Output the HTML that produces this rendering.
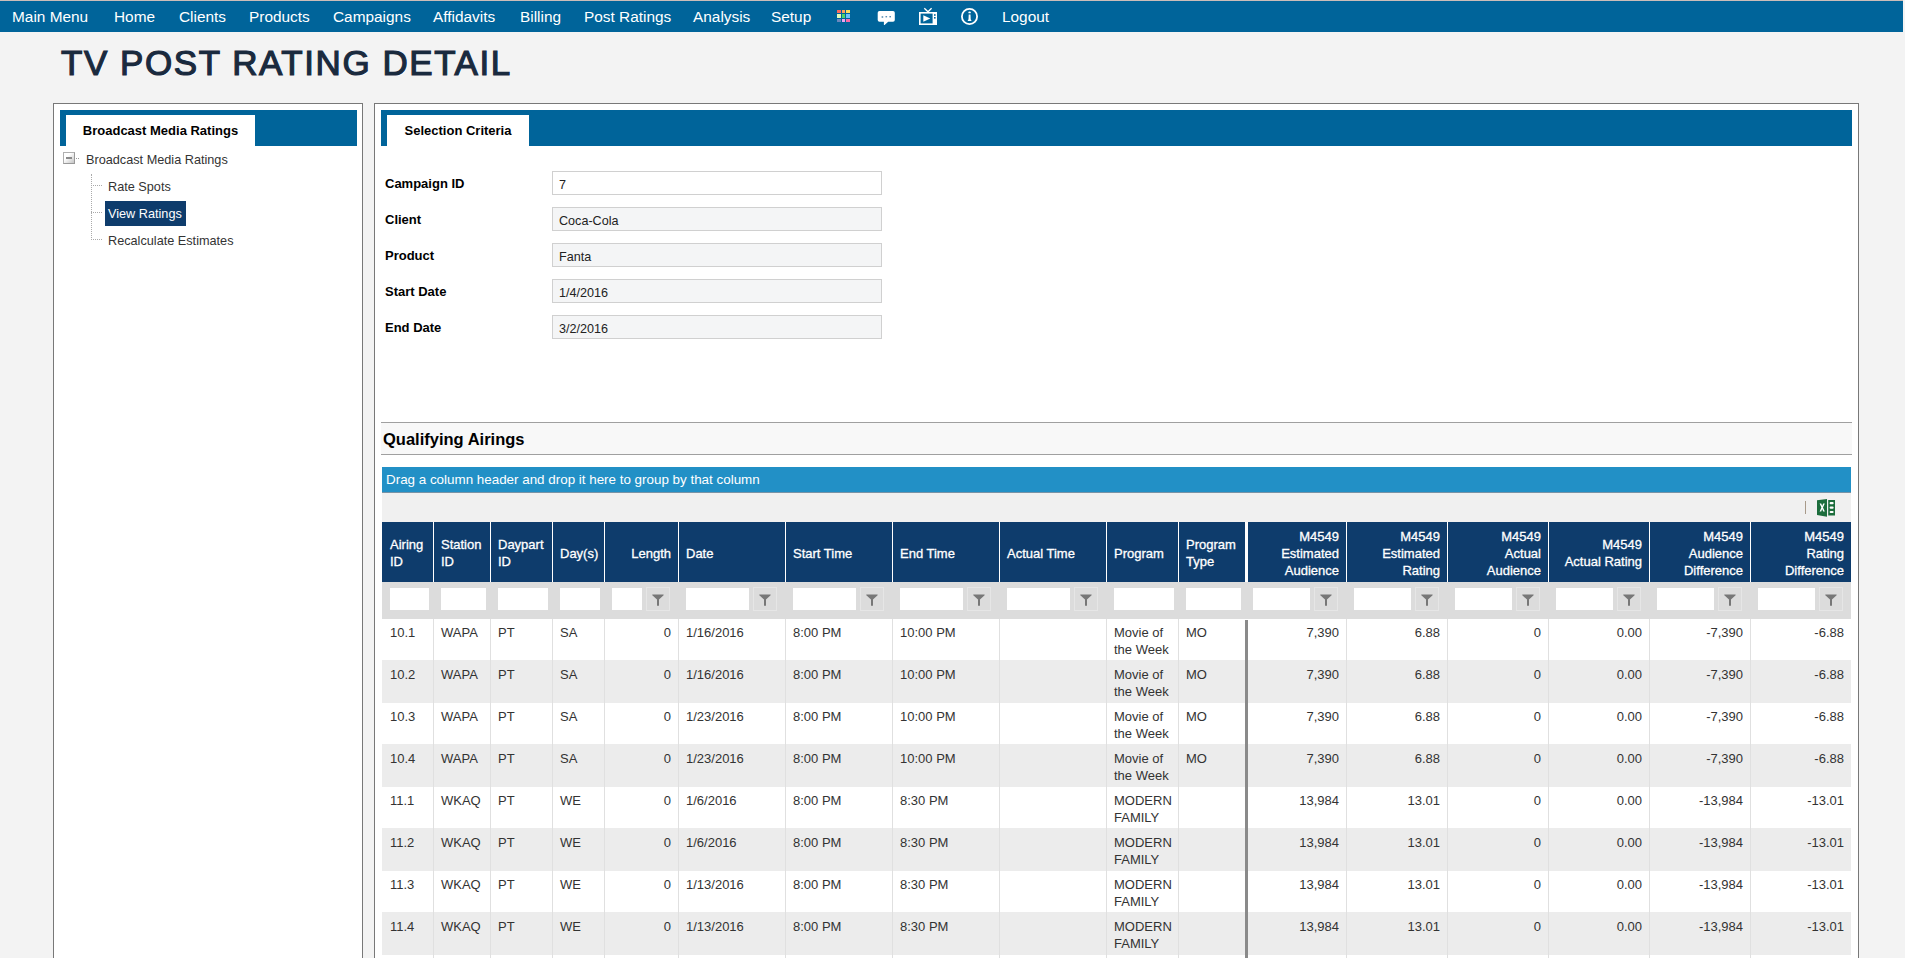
<!DOCTYPE html><html><head><meta charset="utf-8"><title>TV Post Rating Detail</title><style>
*{box-sizing:border-box;margin:0;padding:0}
html,body{width:1905px;height:958px;overflow:hidden}
body{font-family:"Liberation Sans", sans-serif;background:#f3f3f3;position:relative;color:#333}
.a{position:absolute}
.nav{left:0;top:0;width:1903px;height:32px;background:#00649a;border-top:1px solid #cbbdb9}
.nt{position:absolute;top:8px;font-size:15.4px;line-height:18px;color:#fff;white-space:nowrap}
.title{left:61px;top:43px;font-size:35px;line-height:40px;font-weight:normal;-webkit-text-stroke:1.2px #1a2a3e;color:#1a2a3e;letter-spacing:1.55px;white-space:nowrap;text-shadow:1px 1px 0 #fff}
.panel{background:#fff;border:1px solid #787878}
.hbar{background:#00649a}
.tab{background:#fff;font-weight:bold;font-size:13px;color:#000;text-align:center;white-space:nowrap}
.lbl{font-size:13px;font-weight:bold;color:#000;white-space:nowrap}
.inp{border:1px solid #d0d0d0;background:#f4f5f6;font-size:12.6px;color:#222;padding-left:6px;padding-top:2px;line-height:22px;white-space:nowrap}
.tree{font-size:12.7px;color:#333;white-space:nowrap;line-height:17px}
.hd{background:#0e3c6c;color:#fff;-webkit-text-stroke:0.3px #fff;font-size:13px;line-height:17px;display:flex;align-items:center;padding:2px 7px 0 7px}
.hd.r{justify-content:flex-end;text-align:right}
.sep{background:#fff}
.fr{background:#dcdcdc}
.fi{background:#fff}
.fb{border:1px solid #e6e6e6;background:#dcdcdc}
.cell{font-size:13px;line-height:17px;color:#333;padding:5px 7px 0 7px;white-space:nowrap;overflow:hidden}
.cell.r{text-align:right}
.vl{background:#e0e0e0;width:1px}
</style></head><body>
<div class="a nav"></div>
<div class="nt" style="left:12px">Main Menu</div>
<div class="nt" style="left:114px">Home</div>
<div class="nt" style="left:179px">Clients</div>
<div class="nt" style="left:249px">Products</div>
<div class="nt" style="left:333px">Campaigns</div>
<div class="nt" style="left:433px">Affidavits</div>
<div class="nt" style="left:520px">Billing</div>
<div class="nt" style="left:584px">Post Ratings</div>
<div class="nt" style="left:693px">Analysis</div>
<div class="nt" style="left:771px">Setup</div>
<div class="nt" style="left:1002px">Logout</div>
<div class="a" style="left:837px;top:10px;width:4px;height:3px;background:#fb6a5e"></div>
<div class="a" style="left:842px;top:10px;width:3px;height:3px;background:#fca15c"></div>
<div class="a" style="left:846px;top:10px;width:4px;height:3px;background:#fbdc5c"></div>
<div class="a" style="left:837px;top:14px;width:4px;height:4px;background:#e6fbb6"></div>
<div class="a" style="left:842px;top:14px;width:3px;height:4px;background:#4ed46a"></div>
<div class="a" style="left:846px;top:14px;width:4px;height:4px;background:#6ec2fb"></div>
<div class="a" style="left:837px;top:19px;width:4px;height:3px;background:#6b87bd"></div>
<div class="a" style="left:842px;top:19px;width:3px;height:3px;background:#f1a1ee"></div>
<div class="a" style="left:846px;top:19px;width:4px;height:3px;background:#fb69a6"></div>
<svg class="a" style="left:877px;top:10px" width="19" height="16" viewBox="0 0 19 16">
<path d="M2.5 1 H16 A1.8 1.8 0 0 1 17.8 2.8 V10 A1.8 1.8 0 0 1 16 11.8 H11.2 L7.6 15 H6.9 V11.8 H2.5 A1.8 1.8 0 0 1 0.7 10 V2.8 A1.8 1.8 0 0 1 2.5 1 Z" fill="#fff"/>
<rect x="4.6" y="6.2" width="1.6" height="1.6" fill="#5a8fb5"/><rect x="8.5" y="6" width="1.6" height="1.4" fill="#5a8fb5"/><rect x="12.4" y="6" width="1.6" height="1.4" fill="#5a8fb5"/>
</svg>
<svg class="a" style="left:918px;top:7px" width="21" height="19" viewBox="0 0 21 19">
<path d="M6.3 1.2 L10 4.8 L13.6 1.2" stroke="#fff" stroke-width="1.3" fill="none"/>
<rect x="1" y="5" width="18" height="13" fill="#fff"/>
<rect x="2.6" y="6.6" width="12" height="9.8" fill="#00649a"/>
<path d="M5.3 8.2 L12.3 11.5 L5.3 14.8 Z" fill="#fff"/>
<rect x="16" y="7.2" width="1.6" height="1.6" fill="#00649a"/><rect x="16" y="10" width="1.6" height="1.6" fill="#00649a"/>
</svg>
<svg class="a" style="left:960px;top:7px" width="19" height="19" viewBox="0 0 19 19">
<circle cx="9.5" cy="9.5" r="7.6" stroke="#fff" stroke-width="1.8" fill="none"/>
<ellipse cx="9.6" cy="5.4" rx="1.3" ry="0.9" fill="#fff"/>
<path d="M8.7 7.4 H10.5 L10.7 12.3 L11.6 13.9 H7.6 L8.5 12.3 Z" fill="#fff"/>
</svg>
<div class="a title">TV POST RATING DETAIL</div>
<div class="a panel" style="left:53px;top:103px;width:310px;height:870px"></div>
<div class="a hbar" style="left:60px;top:110px;width:297px;height:36px"></div>
<div class="a tab" style="left:66px;top:115px;width:189px;height:31px;line-height:31px">Broadcast Media Ratings</div>
<div class="a" style="left:63px;top:152px;width:12px;height:12px;border:1px solid #b0b0b0;border-right-color:#999;border-bottom-color:#999;background:linear-gradient(135deg,#fff 35%,#c4c4c4)"></div>
<div class="a" style="left:66px;top:157px;width:6px;height:2px;background:#8a8a8a"></div>
<div class="a" style="left:76px;top:158px;width:1px;height:1px;background:#999"></div><div class="a" style="left:78px;top:158px;width:1px;height:1px;background:#999"></div>
<div class="a tree" style="left:86px;top:152px">Broadcast Media Ratings</div>
<div class="a" style="left:91px;top:174px;width:1px;height:66px;border-left:1px dotted #aaa"></div>
<div class="a" style="left:91px;top:185px;width:11px;height:1px;border-top:1px dotted #aaa"></div>
<div class="a" style="left:91px;top:212px;width:11px;height:1px;border-top:1px dotted #aaa"></div>
<div class="a" style="left:91px;top:239px;width:11px;height:1px;border-top:1px dotted #aaa"></div>
<div class="a tree" style="left:108px;top:179px">Rate Spots</div>
<div class="a" style="left:105px;top:201px;width:81px;height:25px;background:#0e3c6c"></div>
<div class="a tree" style="left:108px;top:206px;color:#fff">View Ratings</div>
<div class="a tree" style="left:108px;top:233px">Recalculate Estimates</div>
<div class="a panel" style="left:374px;top:103px;width:1485px;height:870px"></div>
<div class="a hbar" style="left:381px;top:110px;width:1471px;height:36px"></div>
<div class="a tab" style="left:387px;top:115px;width:142px;height:31px;line-height:31px">Selection Criteria</div>
<div class="a lbl" style="left:385px;top:175px;line-height:17px">Campaign ID</div>
<div class="a inp" style="left:552px;top:171px;width:330px;height:24px;background:#fff;">7</div>
<div class="a lbl" style="left:385px;top:211px;line-height:17px">Client</div>
<div class="a inp" style="left:552px;top:207px;width:330px;height:24px;">Coca-Cola</div>
<div class="a lbl" style="left:385px;top:247px;line-height:17px">Product</div>
<div class="a inp" style="left:552px;top:243px;width:330px;height:24px;">Fanta</div>
<div class="a lbl" style="left:385px;top:283px;line-height:17px">Start Date</div>
<div class="a inp" style="left:552px;top:279px;width:330px;height:24px;">1/4/2016</div>
<div class="a lbl" style="left:385px;top:319px;line-height:17px">End Date</div>
<div class="a inp" style="left:552px;top:315px;width:330px;height:24px;">3/2/2016</div>
<div class="a" style="left:381px;top:422px;width:1471px;height:33px;background:#f8f8f8;border-top:1px solid #a0a0a0;border-bottom:1px solid #a0a0a0"></div>
<div class="a" style="left:383px;top:429px;font-size:16.5px;font-weight:bold;color:#000;line-height:20px;white-space:nowrap">Qualifying Airings</div>
<div class="a" style="left:382px;top:467px;width:1469px;height:26px;background:#2290c6;border-bottom:1px solid #7893a6;color:#fff;font-size:13.4px;line-height:25px;padding-left:4px;white-space:nowrap">Drag a column header and drop it here to group by that column</div>
<div class="a" style="left:382px;top:493px;width:1469px;height:29px;background:#f0f0f0"></div>
<div class="a" style="left:1805px;top:501px;width:1px;height:13px;background:#a89a8a"></div>
<svg class="a" style="left:1816px;top:498px" width="21" height="20" viewBox="0 0 21 20">
<path d="M1 2.2 L11 1 V18.8 L1 17 Z" fill="#1c6d3c"/>
<rect x="12.2" y="2" width="6.8" height="15.5" fill="#1c6d3c"/>
<path d="M3.6 5.6 L5.2 5.6 L6.2 7.9 L7.2 5.6 L8.8 5.6 L7 9.5 L8.8 13.4 L7.2 13.4 L6.2 11.1 L5.2 13.4 L3.6 13.4 L5.4 9.5 Z" fill="#fff"/>
<rect x="13.6" y="4" width="4" height="2.2" rx="1" fill="#fff"/><rect x="13.6" y="8.5" width="4" height="2.2" rx="1" fill="#fff"/><rect x="13.6" y="12.9" width="4" height="2.2" rx="1" fill="#fff"/>
</svg>
<div class="a" style="left:382px;top:522px;width:1469px;height:60px;background:#0e3c6c"></div>
<div class="a fr" style="left:382px;top:582px;width:1469px;height:37px"></div>
<div class="a" style="left:1245px;top:522px;width:3px;height:60px;background:#fff"></div>
<div class="a hd" style="left:382px;top:522px;width:51px;height:60px;padding-left:8px;">Airing<br>ID</div>
<div class="a fi" style="left:390px;top:588px;width:39px;height:22px"></div>
<div class="a hd" style="left:434px;top:522px;width:56px;height:60px;">Station<br>ID</div>
<div class="a fi" style="left:441px;top:588px;width:45px;height:22px"></div>
<div class="a hd" style="left:491px;top:522px;width:61px;height:60px;">Daypart<br>ID</div>
<div class="a fi" style="left:498px;top:588px;width:50px;height:22px"></div>
<div class="a hd" style="left:553px;top:522px;width:51px;height:60px;">Day(s)</div>
<div class="a fi" style="left:560px;top:588px;width:40px;height:22px"></div>
<div class="a hd r" style="left:605px;top:522px;width:73px;height:60px;">Length</div>
<div class="a fi" style="left:612px;top:588px;width:30px;height:22px"></div>
<div class="a fb" style="left:646px;top:587px;width:24px;height:24px"></div>
<svg class="a" style="left:652px;top:594px" width="12" height="12" viewBox="0 0 12 12"><path d="M0.3 0.6 H11.6 V1.2 L7 5.6 V11.7 H5 V5.6 L0.3 1.2 Z" fill="#777"/></svg>
<div class="a hd" style="left:679px;top:522px;width:106px;height:60px;">Date</div>
<div class="a fi" style="left:686px;top:588px;width:63px;height:22px"></div>
<div class="a fb" style="left:753px;top:587px;width:24px;height:24px"></div>
<svg class="a" style="left:759px;top:594px" width="12" height="12" viewBox="0 0 12 12"><path d="M0.3 0.6 H11.6 V1.2 L7 5.6 V11.7 H5 V5.6 L0.3 1.2 Z" fill="#777"/></svg>
<div class="a hd" style="left:786px;top:522px;width:106px;height:60px;">Start Time</div>
<div class="a fi" style="left:793px;top:588px;width:63px;height:22px"></div>
<div class="a fb" style="left:860px;top:587px;width:24px;height:24px"></div>
<svg class="a" style="left:866px;top:594px" width="12" height="12" viewBox="0 0 12 12"><path d="M0.3 0.6 H11.6 V1.2 L7 5.6 V11.7 H5 V5.6 L0.3 1.2 Z" fill="#777"/></svg>
<div class="a hd" style="left:893px;top:522px;width:106px;height:60px;">End Time</div>
<div class="a fi" style="left:900px;top:588px;width:63px;height:22px"></div>
<div class="a fb" style="left:967px;top:587px;width:24px;height:24px"></div>
<svg class="a" style="left:973px;top:594px" width="12" height="12" viewBox="0 0 12 12"><path d="M0.3 0.6 H11.6 V1.2 L7 5.6 V11.7 H5 V5.6 L0.3 1.2 Z" fill="#777"/></svg>
<div class="a hd" style="left:1000px;top:522px;width:106px;height:60px;">Actual Time</div>
<div class="a fi" style="left:1007px;top:588px;width:63px;height:22px"></div>
<div class="a fb" style="left:1074px;top:587px;width:24px;height:24px"></div>
<svg class="a" style="left:1080px;top:594px" width="12" height="12" viewBox="0 0 12 12"><path d="M0.3 0.6 H11.6 V1.2 L7 5.6 V11.7 H5 V5.6 L0.3 1.2 Z" fill="#777"/></svg>
<div class="a hd" style="left:1107px;top:522px;width:71px;height:60px;">Program</div>
<div class="a fi" style="left:1114px;top:588px;width:60px;height:22px"></div>
<div class="a hd" style="left:1179px;top:522px;width:66px;height:60px;">Program<br>Type</div>
<div class="a fi" style="left:1186px;top:588px;width:55px;height:22px"></div>
<div class="a hd r" style="left:1248px;top:522px;width:98px;height:60px;">M4549<br>Estimated<br>Audience</div>
<div class="a fi" style="left:1253px;top:588px;width:57px;height:22px"></div>
<div class="a fb" style="left:1314px;top:587px;width:24px;height:24px"></div>
<svg class="a" style="left:1320px;top:594px" width="12" height="12" viewBox="0 0 12 12"><path d="M0.3 0.6 H11.6 V1.2 L7 5.6 V11.7 H5 V5.6 L0.3 1.2 Z" fill="#777"/></svg>
<div class="a hd r" style="left:1347px;top:522px;width:100px;height:60px;">M4549<br>Estimated<br>Rating</div>
<div class="a fi" style="left:1354px;top:588px;width:57px;height:22px"></div>
<div class="a fb" style="left:1415px;top:587px;width:24px;height:24px"></div>
<svg class="a" style="left:1421px;top:594px" width="12" height="12" viewBox="0 0 12 12"><path d="M0.3 0.6 H11.6 V1.2 L7 5.6 V11.7 H5 V5.6 L0.3 1.2 Z" fill="#777"/></svg>
<div class="a hd r" style="left:1448px;top:522px;width:100px;height:60px;">M4549<br>Actual<br>Audience</div>
<div class="a fi" style="left:1455px;top:588px;width:57px;height:22px"></div>
<div class="a fb" style="left:1516px;top:587px;width:24px;height:24px"></div>
<svg class="a" style="left:1522px;top:594px" width="12" height="12" viewBox="0 0 12 12"><path d="M0.3 0.6 H11.6 V1.2 L7 5.6 V11.7 H5 V5.6 L0.3 1.2 Z" fill="#777"/></svg>
<div class="a hd r" style="left:1549px;top:522px;width:100px;height:60px;">M4549<br>Actual Rating</div>
<div class="a fi" style="left:1556px;top:588px;width:57px;height:22px"></div>
<div class="a fb" style="left:1617px;top:587px;width:24px;height:24px"></div>
<svg class="a" style="left:1623px;top:594px" width="12" height="12" viewBox="0 0 12 12"><path d="M0.3 0.6 H11.6 V1.2 L7 5.6 V11.7 H5 V5.6 L0.3 1.2 Z" fill="#777"/></svg>
<div class="a hd r" style="left:1650px;top:522px;width:100px;height:60px;">M4549<br>Audience<br>Difference</div>
<div class="a fi" style="left:1657px;top:588px;width:57px;height:22px"></div>
<div class="a fb" style="left:1718px;top:587px;width:24px;height:24px"></div>
<svg class="a" style="left:1724px;top:594px" width="12" height="12" viewBox="0 0 12 12"><path d="M0.3 0.6 H11.6 V1.2 L7 5.6 V11.7 H5 V5.6 L0.3 1.2 Z" fill="#777"/></svg>
<div class="a hd r" style="left:1751px;top:522px;width:100px;height:60px;">M4549<br>Rating<br>Difference</div>
<div class="a fi" style="left:1758px;top:588px;width:57px;height:22px"></div>
<div class="a fb" style="left:1819px;top:587px;width:24px;height:24px"></div>
<svg class="a" style="left:1825px;top:594px" width="12" height="12" viewBox="0 0 12 12"><path d="M0.3 0.6 H11.6 V1.2 L7 5.6 V11.7 H5 V5.6 L0.3 1.2 Z" fill="#777"/></svg>
<div class="a sep" style="left:433px;top:522px;width:1px;height:60px"></div>
<div class="a sep" style="left:490px;top:522px;width:1px;height:60px"></div>
<div class="a sep" style="left:552px;top:522px;width:1px;height:60px"></div>
<div class="a sep" style="left:604px;top:522px;width:1px;height:60px"></div>
<div class="a sep" style="left:678px;top:522px;width:1px;height:60px"></div>
<div class="a sep" style="left:785px;top:522px;width:1px;height:60px"></div>
<div class="a sep" style="left:892px;top:522px;width:1px;height:60px"></div>
<div class="a sep" style="left:999px;top:522px;width:1px;height:60px"></div>
<div class="a sep" style="left:1106px;top:522px;width:1px;height:60px"></div>
<div class="a sep" style="left:1178px;top:522px;width:1px;height:60px"></div>
<div class="a sep" style="left:1346px;top:522px;width:1px;height:60px"></div>
<div class="a sep" style="left:1447px;top:522px;width:1px;height:60px"></div>
<div class="a sep" style="left:1548px;top:522px;width:1px;height:60px"></div>
<div class="a sep" style="left:1649px;top:522px;width:1px;height:60px"></div>
<div class="a sep" style="left:1750px;top:522px;width:1px;height:60px"></div>
<div class="a" style="left:382px;top:619px;width:1469px;height:339px;background:#fff"></div>
<div class="a cell" style="left:382px;top:619px;width:51px;height:42px;padding-left:8px;">10.1</div>
<div class="a cell" style="left:434px;top:619px;width:56px;height:42px;">WAPA</div>
<div class="a cell" style="left:491px;top:619px;width:61px;height:42px;">PT</div>
<div class="a cell" style="left:553px;top:619px;width:51px;height:42px;">SA</div>
<div class="a cell r" style="left:605px;top:619px;width:73px;height:42px;">0</div>
<div class="a cell" style="left:679px;top:619px;width:106px;height:42px;">1/16/2016</div>
<div class="a cell" style="left:786px;top:619px;width:106px;height:42px;">8:00 PM</div>
<div class="a cell" style="left:893px;top:619px;width:106px;height:42px;">10:00 PM</div>
<div class="a cell" style="left:1107px;top:619px;width:71px;height:42px;">Movie of<br>the Week</div>
<div class="a cell" style="left:1179px;top:619px;width:66px;height:42px;">MO</div>
<div class="a cell r" style="left:1248px;top:619px;width:98px;height:42px;">7,390</div>
<div class="a cell r" style="left:1347px;top:619px;width:100px;height:42px;">6.88</div>
<div class="a cell r" style="left:1448px;top:619px;width:100px;height:42px;">0</div>
<div class="a cell r" style="left:1549px;top:619px;width:100px;height:42px;">0.00</div>
<div class="a cell r" style="left:1650px;top:619px;width:100px;height:42px;">-7,390</div>
<div class="a cell r" style="left:1751px;top:619px;width:100px;height:42px;">-6.88</div>
<div class="a" style="left:382px;top:660px;width:1469px;height:43px;background:#ececec"></div>
<div class="a cell" style="left:382px;top:661px;width:51px;height:42px;padding-left:8px;">10.2</div>
<div class="a cell" style="left:434px;top:661px;width:56px;height:42px;">WAPA</div>
<div class="a cell" style="left:491px;top:661px;width:61px;height:42px;">PT</div>
<div class="a cell" style="left:553px;top:661px;width:51px;height:42px;">SA</div>
<div class="a cell r" style="left:605px;top:661px;width:73px;height:42px;">0</div>
<div class="a cell" style="left:679px;top:661px;width:106px;height:42px;">1/16/2016</div>
<div class="a cell" style="left:786px;top:661px;width:106px;height:42px;">8:00 PM</div>
<div class="a cell" style="left:893px;top:661px;width:106px;height:42px;">10:00 PM</div>
<div class="a cell" style="left:1107px;top:661px;width:71px;height:42px;">Movie of<br>the Week</div>
<div class="a cell" style="left:1179px;top:661px;width:66px;height:42px;">MO</div>
<div class="a cell r" style="left:1248px;top:661px;width:98px;height:42px;">7,390</div>
<div class="a cell r" style="left:1347px;top:661px;width:100px;height:42px;">6.88</div>
<div class="a cell r" style="left:1448px;top:661px;width:100px;height:42px;">0</div>
<div class="a cell r" style="left:1549px;top:661px;width:100px;height:42px;">0.00</div>
<div class="a cell r" style="left:1650px;top:661px;width:100px;height:42px;">-7,390</div>
<div class="a cell r" style="left:1751px;top:661px;width:100px;height:42px;">-6.88</div>
<div class="a cell" style="left:382px;top:703px;width:51px;height:42px;padding-left:8px;">10.3</div>
<div class="a cell" style="left:434px;top:703px;width:56px;height:42px;">WAPA</div>
<div class="a cell" style="left:491px;top:703px;width:61px;height:42px;">PT</div>
<div class="a cell" style="left:553px;top:703px;width:51px;height:42px;">SA</div>
<div class="a cell r" style="left:605px;top:703px;width:73px;height:42px;">0</div>
<div class="a cell" style="left:679px;top:703px;width:106px;height:42px;">1/23/2016</div>
<div class="a cell" style="left:786px;top:703px;width:106px;height:42px;">8:00 PM</div>
<div class="a cell" style="left:893px;top:703px;width:106px;height:42px;">10:00 PM</div>
<div class="a cell" style="left:1107px;top:703px;width:71px;height:42px;">Movie of<br>the Week</div>
<div class="a cell" style="left:1179px;top:703px;width:66px;height:42px;">MO</div>
<div class="a cell r" style="left:1248px;top:703px;width:98px;height:42px;">7,390</div>
<div class="a cell r" style="left:1347px;top:703px;width:100px;height:42px;">6.88</div>
<div class="a cell r" style="left:1448px;top:703px;width:100px;height:42px;">0</div>
<div class="a cell r" style="left:1549px;top:703px;width:100px;height:42px;">0.00</div>
<div class="a cell r" style="left:1650px;top:703px;width:100px;height:42px;">-7,390</div>
<div class="a cell r" style="left:1751px;top:703px;width:100px;height:42px;">-6.88</div>
<div class="a" style="left:382px;top:744px;width:1469px;height:43px;background:#ececec"></div>
<div class="a cell" style="left:382px;top:745px;width:51px;height:42px;padding-left:8px;">10.4</div>
<div class="a cell" style="left:434px;top:745px;width:56px;height:42px;">WAPA</div>
<div class="a cell" style="left:491px;top:745px;width:61px;height:42px;">PT</div>
<div class="a cell" style="left:553px;top:745px;width:51px;height:42px;">SA</div>
<div class="a cell r" style="left:605px;top:745px;width:73px;height:42px;">0</div>
<div class="a cell" style="left:679px;top:745px;width:106px;height:42px;">1/23/2016</div>
<div class="a cell" style="left:786px;top:745px;width:106px;height:42px;">8:00 PM</div>
<div class="a cell" style="left:893px;top:745px;width:106px;height:42px;">10:00 PM</div>
<div class="a cell" style="left:1107px;top:745px;width:71px;height:42px;">Movie of<br>the Week</div>
<div class="a cell" style="left:1179px;top:745px;width:66px;height:42px;">MO</div>
<div class="a cell r" style="left:1248px;top:745px;width:98px;height:42px;">7,390</div>
<div class="a cell r" style="left:1347px;top:745px;width:100px;height:42px;">6.88</div>
<div class="a cell r" style="left:1448px;top:745px;width:100px;height:42px;">0</div>
<div class="a cell r" style="left:1549px;top:745px;width:100px;height:42px;">0.00</div>
<div class="a cell r" style="left:1650px;top:745px;width:100px;height:42px;">-7,390</div>
<div class="a cell r" style="left:1751px;top:745px;width:100px;height:42px;">-6.88</div>
<div class="a cell" style="left:382px;top:787px;width:51px;height:42px;padding-left:8px;">11.1</div>
<div class="a cell" style="left:434px;top:787px;width:56px;height:42px;">WKAQ</div>
<div class="a cell" style="left:491px;top:787px;width:61px;height:42px;">PT</div>
<div class="a cell" style="left:553px;top:787px;width:51px;height:42px;">WE</div>
<div class="a cell r" style="left:605px;top:787px;width:73px;height:42px;">0</div>
<div class="a cell" style="left:679px;top:787px;width:106px;height:42px;">1/6/2016</div>
<div class="a cell" style="left:786px;top:787px;width:106px;height:42px;">8:00 PM</div>
<div class="a cell" style="left:893px;top:787px;width:106px;height:42px;">8:30 PM</div>
<div class="a cell" style="left:1107px;top:787px;width:71px;height:42px;">MODERN<br>FAMILY</div>
<div class="a cell r" style="left:1248px;top:787px;width:98px;height:42px;">13,984</div>
<div class="a cell r" style="left:1347px;top:787px;width:100px;height:42px;">13.01</div>
<div class="a cell r" style="left:1448px;top:787px;width:100px;height:42px;">0</div>
<div class="a cell r" style="left:1549px;top:787px;width:100px;height:42px;">0.00</div>
<div class="a cell r" style="left:1650px;top:787px;width:100px;height:42px;">-13,984</div>
<div class="a cell r" style="left:1751px;top:787px;width:100px;height:42px;">-13.01</div>
<div class="a" style="left:382px;top:828px;width:1469px;height:43px;background:#ececec"></div>
<div class="a cell" style="left:382px;top:829px;width:51px;height:42px;padding-left:8px;">11.2</div>
<div class="a cell" style="left:434px;top:829px;width:56px;height:42px;">WKAQ</div>
<div class="a cell" style="left:491px;top:829px;width:61px;height:42px;">PT</div>
<div class="a cell" style="left:553px;top:829px;width:51px;height:42px;">WE</div>
<div class="a cell r" style="left:605px;top:829px;width:73px;height:42px;">0</div>
<div class="a cell" style="left:679px;top:829px;width:106px;height:42px;">1/6/2016</div>
<div class="a cell" style="left:786px;top:829px;width:106px;height:42px;">8:00 PM</div>
<div class="a cell" style="left:893px;top:829px;width:106px;height:42px;">8:30 PM</div>
<div class="a cell" style="left:1107px;top:829px;width:71px;height:42px;">MODERN<br>FAMILY</div>
<div class="a cell r" style="left:1248px;top:829px;width:98px;height:42px;">13,984</div>
<div class="a cell r" style="left:1347px;top:829px;width:100px;height:42px;">13.01</div>
<div class="a cell r" style="left:1448px;top:829px;width:100px;height:42px;">0</div>
<div class="a cell r" style="left:1549px;top:829px;width:100px;height:42px;">0.00</div>
<div class="a cell r" style="left:1650px;top:829px;width:100px;height:42px;">-13,984</div>
<div class="a cell r" style="left:1751px;top:829px;width:100px;height:42px;">-13.01</div>
<div class="a cell" style="left:382px;top:871px;width:51px;height:42px;padding-left:8px;">11.3</div>
<div class="a cell" style="left:434px;top:871px;width:56px;height:42px;">WKAQ</div>
<div class="a cell" style="left:491px;top:871px;width:61px;height:42px;">PT</div>
<div class="a cell" style="left:553px;top:871px;width:51px;height:42px;">WE</div>
<div class="a cell r" style="left:605px;top:871px;width:73px;height:42px;">0</div>
<div class="a cell" style="left:679px;top:871px;width:106px;height:42px;">1/13/2016</div>
<div class="a cell" style="left:786px;top:871px;width:106px;height:42px;">8:00 PM</div>
<div class="a cell" style="left:893px;top:871px;width:106px;height:42px;">8:30 PM</div>
<div class="a cell" style="left:1107px;top:871px;width:71px;height:42px;">MODERN<br>FAMILY</div>
<div class="a cell r" style="left:1248px;top:871px;width:98px;height:42px;">13,984</div>
<div class="a cell r" style="left:1347px;top:871px;width:100px;height:42px;">13.01</div>
<div class="a cell r" style="left:1448px;top:871px;width:100px;height:42px;">0</div>
<div class="a cell r" style="left:1549px;top:871px;width:100px;height:42px;">0.00</div>
<div class="a cell r" style="left:1650px;top:871px;width:100px;height:42px;">-13,984</div>
<div class="a cell r" style="left:1751px;top:871px;width:100px;height:42px;">-13.01</div>
<div class="a" style="left:382px;top:912px;width:1469px;height:43px;background:#ececec"></div>
<div class="a cell" style="left:382px;top:913px;width:51px;height:42px;padding-left:8px;">11.4</div>
<div class="a cell" style="left:434px;top:913px;width:56px;height:42px;">WKAQ</div>
<div class="a cell" style="left:491px;top:913px;width:61px;height:42px;">PT</div>
<div class="a cell" style="left:553px;top:913px;width:51px;height:42px;">WE</div>
<div class="a cell r" style="left:605px;top:913px;width:73px;height:42px;">0</div>
<div class="a cell" style="left:679px;top:913px;width:106px;height:42px;">1/13/2016</div>
<div class="a cell" style="left:786px;top:913px;width:106px;height:42px;">8:00 PM</div>
<div class="a cell" style="left:893px;top:913px;width:106px;height:42px;">8:30 PM</div>
<div class="a cell" style="left:1107px;top:913px;width:71px;height:42px;">MODERN<br>FAMILY</div>
<div class="a cell r" style="left:1248px;top:913px;width:98px;height:42px;">13,984</div>
<div class="a cell r" style="left:1347px;top:913px;width:100px;height:42px;">13.01</div>
<div class="a cell r" style="left:1448px;top:913px;width:100px;height:42px;">0</div>
<div class="a cell r" style="left:1549px;top:913px;width:100px;height:42px;">0.00</div>
<div class="a cell r" style="left:1650px;top:913px;width:100px;height:42px;">-13,984</div>
<div class="a cell r" style="left:1751px;top:913px;width:100px;height:42px;">-13.01</div>
<div class="a vl" style="left:433px;top:619px;height:340px"></div>
<div class="a vl" style="left:490px;top:619px;height:340px"></div>
<div class="a vl" style="left:552px;top:619px;height:340px"></div>
<div class="a vl" style="left:604px;top:619px;height:340px"></div>
<div class="a vl" style="left:678px;top:619px;height:340px"></div>
<div class="a vl" style="left:785px;top:619px;height:340px"></div>
<div class="a vl" style="left:892px;top:619px;height:340px"></div>
<div class="a vl" style="left:999px;top:619px;height:340px"></div>
<div class="a vl" style="left:1106px;top:619px;height:340px"></div>
<div class="a vl" style="left:1178px;top:619px;height:340px"></div>
<div class="a vl" style="left:1346px;top:619px;height:340px"></div>
<div class="a vl" style="left:1447px;top:619px;height:340px"></div>
<div class="a vl" style="left:1548px;top:619px;height:340px"></div>
<div class="a vl" style="left:1649px;top:619px;height:340px"></div>
<div class="a vl" style="left:1750px;top:619px;height:340px"></div>
<div class="a" style="left:1245px;top:620px;width:3px;height:338px;background:#8a8a8a"></div>
</body></html>
